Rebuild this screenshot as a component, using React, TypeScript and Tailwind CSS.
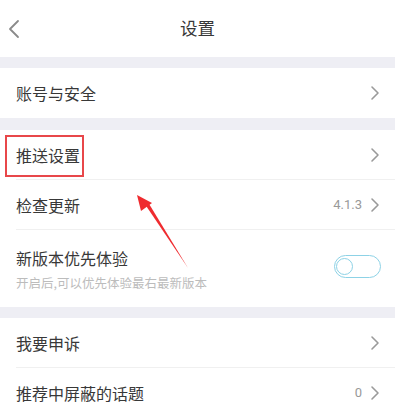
import React from "react";

const Chevron = () => (
  <svg width="10" height="16" viewBox="0 0 10 16" fill="none">
    <path d="M2 2l6 6-6 6" stroke="#9a9a9a" strokeWidth="1.6" strokeLinecap="round" strokeLinejoin="round" />
  </svg>
);

const Row = ({ title, value, divider }: { title: string; value?: string; divider?: boolean }) => (
  <div className="relative flex h-[50px] items-center justify-between bg-white pl-4 pr-[15px]">
    <span className="text-[16px] text-[#383838]">{title}</span>
    <div className="flex items-center gap-[8px]">
      {value && <span className="text-[13px] text-[#999]" style={{ fontFamily: "Roboto, sans-serif" }}>{value}</span>}
      <Chevron />
    </div>
    {divider && <div className="absolute bottom-0 left-4 right-0 h-px bg-[#f0f0f0]" />}
  </div>
);

const Band = () => <div className="h-[12px] bg-[#eeeef4]" />;

export default function App() {
  return (
    <div
      className="relative h-[412px] w-[395px] overflow-hidden bg-[#eeeef4]"
      style={{ fontFamily: '"Noto Sans CJK SC", "Noto Sans", sans-serif' }}
    >
      <div className="relative flex h-[57px] items-center justify-center bg-white">
        <svg className="absolute left-[8px] top-[19px]" width="12" height="20" viewBox="0 0 12 20" fill="none">
          <path d="M10 2L2 10l8 8" stroke="#8a8a8a" strokeWidth="1.8" strokeLinecap="round" strokeLinejoin="round" />
        </svg>
        <span className="text-[17.5px] text-[#383838]">设置</span>
      </div>
      <div className="h-[11px]" />
      <Row title="账号与安全" />
      <Band />
      <Row title="推送设置" divider />
      <Row title="检查更新" value="4.1.3" divider />
      <div className="flex h-[77px] items-center justify-between bg-white pl-4 pr-[14px]">
        <div className="flex flex-col">
          <span className="text-[16px] leading-[22px] text-[#383838]">新版本优先体验</span>
          <span className="mt-[6px] text-[12.5px] leading-[16px] text-[#bcbcbc]">开启后,可以优先体验最右最新版本</span>
        </div>
        <div className="mt-[-4px] flex h-[23px] w-[47px] items-center rounded-full border-[1.5px] border-[#8dd2e6] px-[1px]">
          <div className="h-[17px] w-[17px] rounded-full border-[1.5px] border-[#8dd2e6]" />
        </div>
      </div>
      <div className="h-[11px]" />
      <Row title="我要申诉" divider />
      <Row title="推荐中屏蔽的话题" value="0" />

      <div className="absolute left-[5px] top-[135px] h-[42px] w-[79px] border-2 border-[#e8474a]" />
      <svg className="absolute left-0 top-0" width="395" height="412" viewBox="0 0 395 412">
        <polygon points="188,268 145.5,205 148.5,203" fill="#ef2b2f" />
        <polygon points="137,195 152,203 141,211" fill="#ef2b2f" />
      </svg>
    </div>
  );
}
